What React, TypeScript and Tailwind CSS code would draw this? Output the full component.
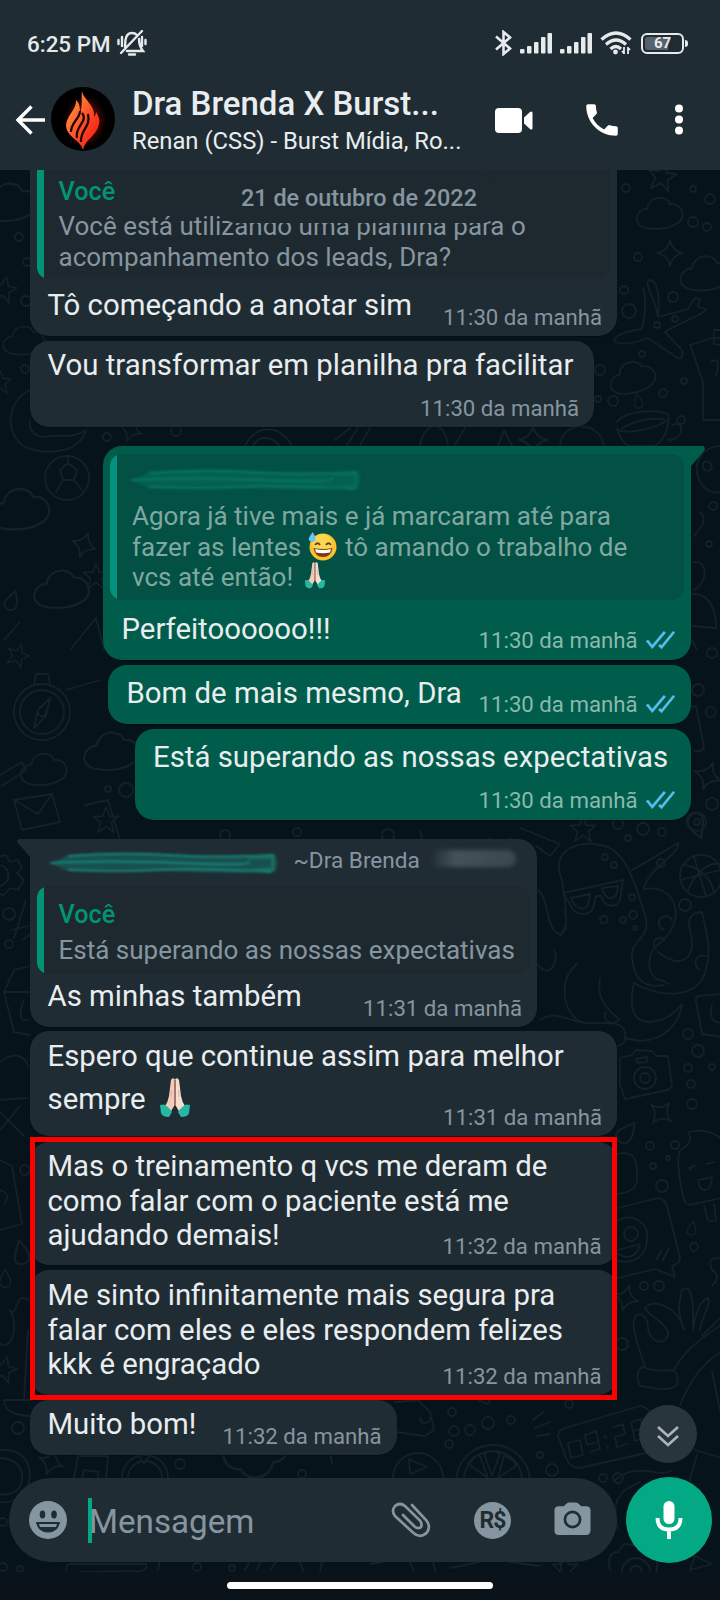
import type { ReactNode } from 'react'

const STAR = 'M0-14L4-4L14-4L6 3L9 14L0 7L-9 14L-6 3L-14-4L-4-4Z'
const SPARKLE = 'M0-13Q2-2 13 0Q2 2 0 13Q-2 2-13 0Q-2-2 0-13Z'
const CLOUD = 'M-14 14C-30 10-22-6-13-5C-10-20 8-18 10-10C22-12 28 4 16 10C8 15-4 16-14 14Z'
const DROP = 'M0-10C5-2 7 2 6 6C4 12-5 11-6 6C-7 2-3-3 0-10Z'

// [path, x, y, scale, rotation]
const shapes: [string, number, number, number, number][] = [
  [STAR, 662, 176, 1, 10],
  [CLOUD, 660, 214, 1, 0],
  [SPARKLE, 670, 253, 1, 0],
  [CLOUD, 706, 274, 1.1, 0],
  [CLOUD, 633, 378, 1, -8],
  [DROP, 638, 401, 0.7, -10],
  [SPARKLE, 533, 440, 1.1, 0],
  [CLOUD, 10, 203, 1.2, 0],
  [STAR, 4, 289, 0.9, 12],
  [CLOUD, 24, 341, 0.9, 0],
  [STAR, 0, 382, 0.8, 0],
  [SPARKLE, 131, 430, 0.9, 20],
  [SPARKLE, 84, 545, 1, 20],
  [CLOUD, 20, 510, 1.3, 0],
  [STAR, 96, 576, 0.9, 0],
  [CLOUD, 62, 590, 1.2, 0],
  [DROP, 12, 600, 1, 20],
  [STAR, 18, 655, 0.8, 20],
  [CLOUD, 112, 752, 1.2, 0],
  [STAR, 106, 820, 0.9, 0],
  [CLOUD, 44, 770, 1, 0],
  [SPARKLE, 708, 776, 1.1, 20],
  [STAR, 583, 829, 0.9, 0],
  [DROP, 697, 826, 1.3, 160],
  [SPARKLE, 661, 1113, 1, 40],
  [DROP, 21, 1252, 1.2, -10],
  [DROP, 5, 1278, 0.9, 0],
  [STAR, 4, 1369, 0.9, 15],
  [SPARKLE, 626, 1298, 1, 15],
  [DROP, 692, 1228, 0.7, 10],
  [DROP, 627, 1132, 1.2, 40],
  [SPARKLE, 51, 1462, 1, 20],
  [CLOUD, 255, 1455, 1.4, 180],
  [STAR, 565, 1568, 0.9, 0],
]

// [cx, cy, r]
const circles: [number, number, number][] = [
  [626, 188, 4], [693, 189, 3], [710, 199, 5], [693, 222, 5], [707, 227, 4], [638, 257, 4],
  [624, 290, 4], [673, 297, 5], [629, 311, 7], [657, 325, 3], [675, 319, 3], [642, 354, 3],
  [600, 370, 5], [684, 381, 3], [663, 393, 4], [613, 401, 5], [681, 420, 4], [598, 399, 3],
  [19, 237, 4], [27, 262, 4], [26, 301, 5], [25, 369, 4], [107, 437, 4], [176, 431, 5],
  [713, 506, 4], [709, 544, 3], [712, 653, 5], [698, 690, 6], [711, 712, 5], [712, 804, 6],
  [697, 822, 9], [697, 822, 3], [126, 790, 7], [108, 789, 3], [9, 914, 6], [9, 944, 4],
  [618, 824, 5], [643, 829, 6], [662, 832, 4], [628, 838, 3], [605, 857, 3], [614, 865, 3],
  [632, 897, 3], [633, 915, 4], [623, 920, 3], [635, 928, 2], [661, 863, 4], [685, 905, 6],
  [688, 1034, 5], [698, 1051, 6], [688, 1068, 4], [712, 1067, 3], [691, 1084, 4], [692, 1104, 5],
  [650, 1146, 4], [675, 1145, 4], [653, 1166, 3], [668, 1158, 2], [662, 1186, 6], [694, 1247, 4],
  [644, 1286, 4], [659, 1286, 5], [622, 1344, 6], [569, 1404, 4], [452, 1412, 4], [454, 1431, 5],
  [470, 1430, 5], [488, 1423, 6], [511, 1420, 4], [449, 1444, 4], [540, 1455, 3], [552, 1470, 6],
  [603, 1478, 4], [618, 1478, 5], [18, 1428, 6], [25, 1170, 5], [180, 1464, 5], [302, 1474, 4],
  [3, 1522, 4], [3, 1567, 4], [20, 1569, 3], [197, 1567, 4], [232, 1568, 3], [388, 835, 6],
  [225, 835, 5], [297, 832, 4],
]

const drawings = [
  // plane
  'M658 317C656 300 642 281 650 280C658 280 660 300 658 317L688 309L695 298L700 299L698 307L706 309C704 315 680 322 665 332L682 350C684 358 680 360 676 357L648 338C630 345 616 345 614 340C616 334 632 330 642 329Q648 300 643 288',
  // console
  'M690 345L712 338L728 338M690 345L703 382L703 420L728 420M714 330L728 330L728 346L714 344ZM710 362Q722 355 716 375',
  // cup
  'M617 422C625 410 665 408 669 416C672 425 620 438 617 428C620 440 626 446 632 446L655 446C664 440 668 430 669 418M672 425C686 420 684 440 668 440M622 428C640 418 655 418 664 419',
  // moon and its face
  'M30 390C8 400 4 430 22 445C40 456 80 455 86 430C70 440 60 434 50 436C36 440 28 430 30 420',
  // crayons and rings above the reply
  'M335 440L350 428M347 445L358 428M360 445L370 428M253 446C258 436 270 434 280 446M245 446C256 424 280 424 292 446M420 445C425 420 445 420 448 445M455 445L465 428M560 446C562 420 600 420 604 446M498 446L504 430L512 446',
  // football
  'M45 478A22 22 0 1 0 89 478A22 22 0 1 0 45 478ZM60 470L68 463L77 470L74 480L63 480ZM63 480L56 492M74 480L82 490M68 463L68 456',
  // emoji on the right edge
  'M722 446C700 446 694 464 698 476C702 490 712 494 722 492M703 463Q710 458 712 468Q708 474 703 468ZM700 512Q706 516 702 526L694 536M694 562C706 560 710 580 694 590M692 594C710 594 716 608 716 628L692 626M692 640L697 650',
  // compass
  'M14 712A28 28 0 1 0 70 712A28 28 0 1 0 14 712ZM20 712A22 22 0 1 0 64 712A22 22 0 1 0 20 712ZM50 698L46 716L34 728L38 710ZM34 684L36 674L48 674L50 684M38 712A4 4 0 1 0 46 712',
  // pencil, envelope and phone
  'M0 775L22 762L26 770L2 786M14 800L52 794L60 822L22 830ZM14 800L38 814L52 794M70 650L96 618L104 650M4 640L20 622M66 690L100 680M85 805L108 800L120 840',
  'M684 708L696 706L704 748Q702 752 694 751M420 830L430 870M490 838Q500 850 510 838',
  // gear
  'M-6 858L6 855L10 862L18 860L22 868L17 873L24 880L18 890L10 888L4 895L-6 893M-2 865A10 10 0 1 1-2 886M12 930L28 926M14 938L26 900M22 940L30 935',
  // carton
  'M14 970L30 966M14 970L4 992L14 1032L30 1035M4 992L30 992M24 1000C18 1014 20 1022 28 1020',
  'M0 1062C12 1052 24 1054 28 1066M0 1100L26 1098M0 1112L24 1136M0 1130L20 1106M0 1160L12 1166L22 1224L0 1230M0 1190Q12 1194 4 1204',
  'M28 1300C14 1290 18 1320 10 1310C20 1330 10 1350 0 1344M28 1330L24 1398M4 1400L30 1400M4 1402Q6 1415 30 1416',
  // octopus
  'M560 936C570 925 566 912 562 880C550 852 575 840 600 845C625 848 634 880 645 915C652 940 630 938 632 958C635 985 650 988 664 985M577 964C558 980 562 1010 580 1022C600 1026 618 1018 624 1030C628 1040 624 1044 618 1046M658 952C680 970 698 960 690 930C686 915 696 912 702 912C706 930 712 950 706 970C698 1000 660 998 634 983M634 983C628 1010 634 1022 650 1022C670 1020 676 1010 682 1004C680 1020 668 1040 640 1041L624 1038',
  'M632 870C650 860 666 850 678 843C680 855 650 866 644 888M644 889C672 884 682 910 672 928C665 945 645 945 650 970C655 984 664 978 668 984M600 978C596 1000 608 1010 620 1020M655 948A6 6 0 1 1 665 940M664 930A7 7 0 1 1 672 920M700 970A6 6 0 1 1 706 956M538 965C550 980 560 960 554 950M538 890C550 900 545 930 560 934C570 930 565 920 565 910M540 1020C555 1010 565 1020 582 1022M606 1012A6 6 0 1 0 618 1020',
  // sunglasses
  'M563 893L623 880L620 900C618 908 604 908 601 896L596 896L593 908C588 918 574 914 571 906ZM571 898L590 894L588 905C584 912 574 908 571 898ZM602 888L618 886C618 900 606 904 602 888Z',
  'M520 828L560 844L550 856L536 846M600 918Q608 912 607 922Q600 926 600 918Z',
  // basketball
  'M680 876A21 21 0 1 0 722 876A21 21 0 1 0 680 876M684 865C700 866 712 880 714 893M688 890C696 872 708 862 720 864M694 857L706 896M680 880L720 870',
  // card
  'M722 994L698 996Q695 998 696 1002L702 1034L722 1037M712 1005C708 1015 714 1025 722 1022',
  // camera
  'M620 1058L632 1055L636 1050L652 1051L656 1056L668 1056L672 1086L668 1090L625 1099L620 1085ZM634 1078A11 11 0 1 0 656 1078A11 11 0 1 0 634 1078ZM640 1078A5 5 0 1 0 650 1078A5 5 0 1 0 640 1078ZM636 1059L647 1057L647 1062L637 1063Z',
  // ice lolly
  'M688 1133C692 1130 712 1128 722 1140M688 1133C694 1142 685 1148 680 1150C676 1160 680 1184 684 1200Q686 1206 694 1204L722 1198M704 1206L708 1220Q712 1222 716 1220L714 1204M688 1168L696 1166M690 1170L694 1165M706 1164L714 1162M698 1180L712 1177Q711 1192 703 1190Q699 1188 698 1180',
  // speech bubble with a grin
  'M618 1208L658 1198Q664 1198 667 1206L680 1258Q680 1262 676 1264L672 1266L675 1277L655 1269L618 1278M618 1220C635 1212 650 1225 647 1240C646 1258 632 1264 618 1261M624 1234A7 7 0 1 0 638 1234A7 7 0 1 0 624 1234M618 1250L640 1244C638 1256 628 1260 618 1254M656 1260L662 1250M663 1260L669 1248M617 1154C635 1150 638 1160 637 1180Q636 1192 617 1194M722 1258Q706 1256 712 1270Q722 1276 712 1286',
  // ok hand
  'M645 1367C638 1345 632 1330 634 1320C638 1308 648 1316 648 1328C650 1345 668 1346 668 1332C664 1320 650 1318 645 1308C655 1296 680 1310 684 1330M684 1330C676 1310 680 1300 682 1290C690 1284 694 1295 693 1326M693 1330C696 1310 702 1300 708 1298C712 1302 702 1316 700 1330M702 1336L722 1316M674 1370C684 1350 700 1340 722 1324M642 1367Q654 1372 672 1370Q679 1372 677 1384Q674 1390 660 1389L640 1386Q634 1374 642 1367Z',
  'M680 1405C690 1380 705 1360 722 1352M712 1372L722 1420M695 1450L722 1458M697 1455L688 1486',
  // alarm clock
  'M565 1428L640 1406Q655 1408 660 1440L650 1452L580 1468Q570 1468 566 1458L558 1436Q558 1430 565 1428ZM568 1443L580 1440L583 1455L571 1458ZM598 1442L587 1445L585 1435L596 1431L600 1449L590 1452M605 1436L606 1438M607 1446L608 1448M613 1427L623 1424L625 1434L615 1437L617 1447L627 1444M631 1422L641 1419L643 1428L633 1431ZM633 1431L643 1428L645 1438L635 1441Z',
  'M533 1420L543 1412M535 1428L550 1422M537 1436L550 1434M395 1402L420 1400M396 1432L425 1436L434 1430L430 1412L420 1402M420 1418A5 5 0 1 0 430 1418M478 1400L488 1404L490 1400',
  // citrus slice
  'M456 1482A37 37 0 1 1 530 1482M464 1480A29 29 0 1 1 522 1480M492 1476L484 1454Q492 1448 500 1454ZM488 1478L468 1464Q474 1454 480 1456ZM498 1478L504 1456Q514 1458 516 1466ZM486 1480L466 1480M500 1480L520 1480',
  // play button and stopwatch
  'M393 1478A25 25 0 1 1 443 1478M409 1459L410 1474L427 1467ZM122 1478A23 23 0 1 1 168 1478M128 1478A17 17 0 1 1 162 1478M140 1458L144 1464L152 1452M0 1450C20 1448 30 1460 30 1476C28 1495 15 1504 0 1502M0 1458C15 1458 24 1468 22 1480C20 1492 10 1496 0 1494M78 1456L108 1456L106 1478M78 1456L74 1478M82 1478L84 1470L98 1472L98 1478M330 1452L332 1464',
  'M615 1480C640 1460 660 1480 672 1470M618 1530C610 1500 620 1490 640 1482M66 1570Q66 1562 76 1564L146 1564Q148 1570 140 1571L80 1572M160 1560L158 1570M245 1570L250 1560M256 1570L262 1560M270 1570L276 1562M300 1562L304 1572M322 1562L320 1572',
  'M610 1570Q606 1552 618 1552L624 1544L640 1546L644 1552L652 1552Q660 1560 656 1572M622 1572A14 14 0 0 1 650 1572M630 1572A6 6 0 0 1 642 1572M450 1568L480 1562M510 1562L540 1566M560 1562L562 1572M695 1556L712 1564L690 1570ZM410 1562L414 1572M432 1560L436 1572M370 1564L382 1562',
]

function Wallpaper() {
  return (
    <svg
      className="absolute inset-0 h-full w-full"
      viewBox="0 170 720 1402"
      fill="none"
      stroke="#142128"
      strokeWidth="1.8"
      strokeLinejoin="round"
      strokeLinecap="round"
    >
      {shapes.map(([d, x, y, s, r], i) => (
        <path key={i} d={d} transform={`translate(${x} ${y}) rotate(${r}) scale(${s})`} />
      ))}
      {circles.map(([cx, cy, r], i) => (
        <circle key={i} cx={cx} cy={cy} r={r} />
      ))}
      {drawings.map((d, i) => (
        <path key={i} d={d} />
      ))}
    </svg>
  )
}

function Ticks() {
  return (
    <svg className="mb-[3px] h-[20px] w-[31px]" viewBox="0 0 32 20" fill="none" stroke="#53bdeb" strokeWidth="2.8">
      <path d="M2 10.5L7.5 17L20.5 1.5" />
      <path d="M14.5 15L17 17.5L30 1.5" />
    </svg>
  )
}

function Time({ children, sent = false }: { children: ReactNode; sent?: boolean }) {
  return (
    <div
      className={`col-start-1 row-start-1 flex items-end gap-[7px] self-end justify-self-end text-[22.2px] leading-[26px] whitespace-nowrap ${
        sent ? 'mr-[15px] mb-[7px] text-[#8db8ae]' : 'mr-[15px] mb-[6.5px] text-[#8696a0]'
      }`}
    >
      <span>{children}</span>
      {sent && <Ticks />}
    </div>
  )
}

function Bubble({
  className,
  time,
  sent = false,
  children,
}: {
  className: string
  time: string
  sent?: boolean
  children: ReactNode
}) {
  return (
    <div
      className={`relative grid shrink-0 rounded-[19px] shadow-[0_1px_1px_rgba(0,0,0,0.3)] ${
        sent ? 'self-end bg-[#005d4b]' : 'self-start bg-[#202c33]'
      } ${className}`}
    >
      <div className="col-start-1 row-start-1 min-w-0">{children}</div>
      <Time sent={sent}>{time}</Time>
    </div>
  )
}

function Message({ className = '', children }: { className?: string; children: ReactNode }) {
  return (
    <p className={`text-[29.35px] leading-[34.5px] whitespace-nowrap text-[#e9edef] ${className}`}>{children}</p>
  )
}

function PrayingHands({ className }: { className: string }) {
  return (
    <svg className={`inline-block ${className}`} viewBox="0 0 30 40" role="img">
      <path d="M11 2Q12.500-1 14.700 1V27L10 35L4.500 29Q8 24 9 18Z" fill="#f3cbb8" />
      <path d="M19 2Q17.500-1 15.300 1V27L20 35L25.500 29Q22 24 21 18Z" fill="#f8dccd" />
      <path d="M15 2V28" stroke="#8f5f52" strokeWidth="1.2" fill="none" />
      <path d="M11.500 12L11 19M18.500 12L19 19" stroke="#d9a592" strokeWidth="0.8" fill="none" />
      <path d="M0 27L4 26.500Q10 30 12 34L9 39Q2 39 1 35Z" fill="#25b9a4" />
      <path d="M30 27L26 26.500Q20 30 18 34L21 39Q28 39 29 35Z" fill="#25b9a4" />
    </svg>
  )
}

function SweatSmile() {
  return (
    <svg className="-mt-1 mr-[2px] inline-block h-[29px] w-[29px] align-middle" viewBox="0 0 29 29" role="img">
      <circle cx="15" cy="15" r="13.500" fill="#fbc02f" />
      <circle cx="14" cy="12" r="10" fill="#fdd650" />
      <path d="M5.500 16Q15 18 24.500 16Q23 25 15 25Q7 25 5.500 16Z" fill="#7a3a18" />
      <path d="M7 17Q15 19 23 17L22 20.500Q15 22 8 20.500Z" fill="#fff" />
      <path d="M7 13Q9.500 9.500 12 13M18 13Q20.500 9.500 23 13" stroke="#6b3f14" strokeWidth="1.8" fill="none" />
      <path d="M4.500 0C8 5 8 7 7 9C5 11 2 10 1 8C0 6 3 3 4.500 0Z" fill="#6cc5f0" />
    </svg>
  )
}

function Quote({ className = '', sent = false, children }: { className?: string; sent?: boolean; children: ReactNode }) {
  return (
    <div
      className={`mx-[7px] flex overflow-hidden rounded-[12px] text-[26px] leading-[30.6px] whitespace-nowrap ${
        sent ? 'bg-[#025144] text-[#80a8a1]' : 'bg-[#1e292f] text-[#8696a0]'
      } ${className}`}
    >
      <div className={`w-[7px] shrink-0 ${sent ? 'bg-[#06917f]' : 'bg-[#029375]'}`} />
      <div className="flex flex-col pl-[15px]">{children}</div>
    </div>
  )
}

function Smear({ className, dark = false }: { className: string; dark?: boolean }) {
  return (
    <svg
      className={`blur-[0.8px] ${className}`}
      viewBox="0 0 230 22"
      preserveAspectRatio="none"
      fill="none"
      strokeLinecap="round"
    >
      <path
        d="M18 3Q60 0 120 3T226 2Q231 10 226 20Q170 22 120 19T18 19L10 15L1 11L12 7Z"
        fill={dark ? '#04604f' : '#18504f'}
      />
      <path
        d="M20 4Q70 0 120 3T224 3M2 11Q60 8 130 11T200 10M20 18Q70 20 110 18T222 20"
        stroke={dark ? '#077766' : '#16857a'}
        strokeWidth="2"
      />
      <path d="M200 5H224V17L196 19" stroke={dark ? '#076b5b' : '#187268'} strokeWidth="3" />
    </svg>
  )
}

function SignalBars() {
  return (
    <svg className="h-[22px] w-[32px]" viewBox="0 0 32 22" fill="#e6eaec">
      <rect x="0" y="17" width="4.500" height="4.500" rx="1" />
      <rect x="7" y="14" width="4.500" height="7.500" rx="1" />
      <rect x="14" y="10" width="4.500" height="11.500" rx="1" />
      <rect x="21" y="5" width="4.500" height="16.500" rx="1" />
      <rect x="27.500" y="1" width="4.500" height="20.500" rx="1" />
    </svg>
  )
}

function StatusBar() {
  return (
    <div className="flex h-[86px] items-center pr-[32px] pl-[27px] text-[#e6eaec]">
      <span className="mt-[2px] text-[22.4px] leading-[26px] font-medium">6:25 PM</span>
      <svg
        className="ml-[6px] h-[28px] w-[30px]"
        viewBox="0 0 30 28"
        fill="none"
        stroke="currentColor"
        strokeWidth="2.400"
        strokeLinecap="round"
      >
        <path d="M8 18L8.500 11Q9.500 4 15 4Q18 4 20 6M22 10Q22 17 26 22L10 22M25 2L4 24M1.500 11V15M5 8V17M25 8V17M28.500 11V15M12 25.500H18" />
      </svg>
      <div className="ml-auto flex items-center">
        <svg className="h-[26px] w-[17px]" viewBox="0 0 17 26" fill="none" stroke="currentColor" strokeWidth="2.600">
          <path d="M1 6.500L15 18.500L8.500 24V2L15 7.500L1 19.500" />
        </svg>
        <div className="ml-[8px] flex gap-[8px]">
          <SignalBars />
          <SignalBars />
        </div>
        <svg
          className="ml-[8px] h-[24px] w-[32px]"
          viewBox="0 0 32 24"
          fill="none"
          stroke="currentColor"
          strokeWidth="3.200"
        >
          <path d="M1.500 8.500Q16-4.500 30.500 8.500M6 13.500Q16 4.500 26 13.500M10.500 18Q16 13 21 18" />
          <circle cx="15.500" cy="21" r="2.400" fill="currentColor" stroke="none" />
          <path d="M24 16V23M28 16V23M22 20L24 22.500M30 19L28 16.500" strokeWidth="1.800" />
        </svg>
        <div className="ml-[9px] flex h-[21px] w-[43px] items-center rounded-[6px] border-[2.5px] border-current p-[2px]">
          <div className="flex h-full w-full items-center justify-center rounded-[3px] bg-[linear-gradient(90deg,#56616a_66%,transparent_66%)] text-[15px] leading-none font-bold">
            67
          </div>
        </div>
        <div className="ml-[1px] h-[7px] w-[3px] rounded-r bg-current" />
      </div>
    </div>
  )
}

function Avatar() {
  return (
    <svg className="ml-[6px] h-[64px] w-[64px]" viewBox="0 0 64 64">
      <defs>
        <linearGradient id="flame" x1="0" y1="0" x2="1" y2="1">
          <stop offset="0.200" stopColor="#ff8a3a" />
          <stop offset="0.600" stopColor="#fb4322" />
          <stop offset="1" stopColor="#f01010" />
        </linearGradient>
        <radialGradient id="glow">
          <stop offset="0.500" stopColor="#8c1208" />
          <stop offset="1" stopColor="#000" />
        </radialGradient>
      </defs>
      <circle cx="32" cy="32" r="32" fill="#000" />
      <ellipse cx="34" cy="34" rx="21" ry="26" fill="url(#glow)" opacity="0.600" />
      <path
        d="M31 4C32 12 45 19 43 30C44 29 45 27 45 25C48 30 49 33 48 37C46 49 34 52 32 63C30 53 15 50 15 38C16 28 26 22 25 13C29 17 29 21 29 26C32 18 30 11 31 4Z"
        fill="url(#flame)"
      />
      <path
        d="M29 24C29 32 20 35 20 45M31 26C38 34 23 40 26 51M37 27C40 41 29 42 30 55"
        stroke="#1d0302"
        strokeWidth="2.200"
        fill="none"
      />
    </svg>
  )
}

function Header() {
  return (
    <header className="relative z-10 h-[170px] shrink-0 bg-[#202c33]">
      <StatusBar />
      <div className="flex h-[66px] items-center pl-[15px]">
        <svg className="mt-[1px] h-[30px] w-[30px]" viewBox="0 0 30 30" fill="none" stroke="#fff" strokeWidth="3.400">
          <path d="M30 15H3M16.500 1.500L3 15L16.500 28.500" />
        </svg>
        <Avatar />
        <div className="mt-[4px] ml-[17px] w-[346px] whitespace-nowrap text-[#e9edef]">
          <h1 className="text-[33px] leading-[38px] font-medium">Dra Brenda X Burst...</h1>
          <p className="mt-[2px] text-[23.8px] leading-[32px]">Renan (CSS) - Burst Mídia, Ro...</p>
        </div>
        <svg className="mt-[2px] ml-[17px] h-[25px] w-[38px]" viewBox="0 0 38 25" fill="#fff">
          <rect width="27" height="25" rx="4" />
          <path d="M29 9.500L35 4Q37.500 2.500 37.500 5V20Q37.500 22.500 35 21L29 15.500Z" />
        </svg>
        <svg className="mt-[2px] ml-[48px] h-[42px] w-[42px]" viewBox="0 0 24 24" fill="#fff">
          <path d="M6.620 10.790c1.440 2.830 3.760 5.140 6.590 6.590l2.200-2.200c.27-.27.67-.36 1.020-.24 1.120.37 2.330.57 3.570.57.55 0 1 .45 1 1V20c0 .55-.45 1-1 1-9.390 0-17-7.610-17-17 0-.55.45-1 1-1h3.500c.55 0 1 .45 1 1 0 1.250.2 2.450.57 3.570.11.35.03.74-.25 1.020l-2.200 2.200z" />
        </svg>
        <svg className="mt-[2px] ml-[52px] h-[32px] w-[8px]" viewBox="0 0 8 32" fill="#fff">
          <circle cx="4" cy="4.500" r="4" />
          <circle cx="4" cy="15.500" r="4" />
          <circle cx="4" cy="26.500" r="4" />
        </svg>
      </div>
    </header>
  )
}

function Composer() {
  return (
    <div className="absolute inset-x-0 bottom-[9px] flex items-center pl-[9px]">
      <div className="flex h-[84px] w-[608px] items-center rounded-full bg-[#202c33]">
        <svg className="ml-[20px] h-[38px] w-[38px]" viewBox="0 0 38 38">
          <circle cx="19" cy="19" r="19" fill="#8696a0" />
          <ellipse cx="13.500" cy="13.500" rx="2.800" ry="4" fill="#202c33" />
          <ellipse cx="25" cy="13.500" rx="2.800" ry="4" fill="#202c33" />
          <path d="M7 21H31Q29 31.500 19 31.500Q9 31.500 7 21Z" fill="#202c33" />
          <path d="M10 23H28L27 26H11Z" fill="#8696a0" />
        </svg>
        <div className="ml-[21px] h-[45px] w-[4px] bg-[#04a784]" />
        <span className="mt-[3px] -ml-[3px] w-[300px] text-[33.2px] leading-[40px] text-[#8696a0]">Mensagem</span>
        <svg
          className="ml-[2px] h-[38px] w-[40px]"
          viewBox="0 0 40 38"
          fill="none"
          stroke="#8696a0"
          strokeWidth="2.700"
          strokeLinecap="round"
        >
          <path d="M21 4L35.500 19.500Q40 26 36 31.500Q29 38 22.500 32L4 15Q0 10 4 5Q9 1 14 5L29 19.500Q32 24 29.500 26.500Q26.500 28 23.500 25.500L12 14" />
        </svg>
        <div className="ml-[43px] flex h-[37px] w-[37px] items-center justify-center rounded-full bg-[#8696a0] text-[23px] leading-none font-bold tracking-[-1px] text-[#202c33]">
          R$
        </div>
        <svg className="-mt-[3px] ml-[43px] h-[35px] w-[37px]" viewBox="0 0 38 35">
          <path
            d="M5 5H10L13 2Q14 1 16 1H22Q24 1 25 2L28 5H33Q37.500 5 37.500 9V30Q37 34.500 33 34.500H5Q0.500 34.500 0.500 30V9Q0.500 5 5 5Z"
            fill="#8696a0"
          />
          <circle cx="19" cy="18.500" r="7.800" fill="#8696a0" stroke="#202c33" strokeWidth="2.800" />
        </svg>
      </div>
      <div className="ml-[9px] flex h-[86px] w-[86px] items-center justify-center rounded-full bg-[#03a884]">
        <svg className="h-[38px] w-[28px]" viewBox="0 0 28 38" fill="none">
          <rect x="8.500" y="0" width="11" height="23" rx="5.500" fill="#fff" />
          <path d="M2.500 17Q2.500 28.500 14 28.500Q25.500 28.500 25.500 17M14 28V38" stroke="#fff" strokeWidth="4" />
        </svg>
      </div>
    </div>
  )
}

export default function App() {
  return (
    <div className="flex h-[1600px] w-[720px] flex-col overflow-hidden bg-[#0a131a] font-['Roboto',sans-serif]">
      <Header />
      <main className="relative h-[1402px] shrink-0 overflow-hidden bg-[#07131a]">
        <Wallpaper />
        <div className="relative flex flex-col pr-[29.5px] pl-[29.5px]">
          <Bubble className="h-[166px] w-[587.5px] rounded-t-none" time="11:30 da manhã">
            <Quote className="h-[109px] rounded-t-none">
              <span className="mt-[7px] text-[25.2px] leading-[29px] font-medium text-[#029375]">Você</span>
              <span className="mt-[5px]">Você está utilizando uma planilha para o</span>
              <span>acompanhamento dos leads, Dra?</span>
            </Quote>
            <Message className="mt-[9px] pl-[18px]">Tô começando a anotar sim</Message>
          </Bubble>

          <Bubble className="mt-[5px] h-[86px] w-[564.5px]" time="11:30 da manhã">
            <Message className="mt-[7px] pl-[18px]">Vou transformar em planilha pra facilitar</Message>
          </Bubble>

          <Bubble sent className="mt-[19px] h-[214px] w-[587.5px] rounded-tr-none" time="11:30 da manhã">
            <svg className="absolute top-0 -right-[14px] h-[22px] w-[15px]" viewBox="0 0 15 22" fill="#005d4b">
              <path d="M0 0H13Q16 1 14 5L1 20H0Z" />
            </svg>
            <Quote sent className="mt-[8px] h-[146px]">
              <Smear dark className="mt-[15px] -ml-[2px] h-[22px] w-[232px]" />
              <span className="mt-[10px]">Agora já tive mais e já marcaram até para</span>
              <span>
                fazer as lentes <SweatSmile /> tô amando o trabalho de
              </span>
              <span>
                vcs até então! <PrayingHands className="-mt-2 ml-[4px] h-[27px] w-[22px] align-middle" />
              </span>
            </Quote>
            <Message className="mt-[12px] pl-[18.5px]">Perfeitoooooo!!!</Message>
          </Bubble>

          <Bubble sent className="mt-[5px] h-[59px] w-[582.5px]" time="11:30 da manhã">
            <Message className="mt-[11px] pl-[18.5px]">Bom de mais mesmo, Dra</Message>
          </Bubble>

          <Bubble sent className="mt-[5px] h-[91px] w-[555.5px]" time="11:30 da manhã">
            <Message className="mt-[11px] pl-[18px]">Está superando as nossas expectativas</Message>
          </Bubble>

          <Bubble className="mt-[19px] h-[188px] w-[507.5px] rounded-tl-none" time="11:31 da manhã">
            <svg className="absolute top-0 -left-[13px] h-[20px] w-[14px]" viewBox="0 0 14 20" fill="#202c33">
              <path d="M14 0H2Q-1 1 1 4L13 18H14Z" />
            </svg>
            <div className="flex h-[47px] items-start pl-[19px] text-[22.6px] leading-[27px] whitespace-nowrap text-[#8696a0]">
              <Smear className="mt-[13px] h-[22px] w-[230px]" />
              <span className="mt-[8px] ml-[15px]">~Dra Brenda</span>
              <div className="mt-[11px] ml-[10px] h-[17px] w-[86px] rounded-full bg-gradient-to-r from-transparent via-[#46525a] via-30% to-[#3b474f] blur-[2px]" />
            </div>
            <Quote className="h-[88px]">
              <span className="mt-[14px] text-[25.2px] leading-[29px] font-medium text-[#029375]">Você</span>
              <span className="mt-[6px]">Está superando as nossas expectativas</span>
            </Quote>
            <Message className="mt-[5px] pl-[18px]">As minhas também</Message>
          </Bubble>

          <Bubble className="mt-[4px] h-[105px] w-[587.5px]" time="11:31 da manhã">
            <Message className="mt-[8px] pl-[18px]">Espero que continue assim para melhor</Message>
            <Message className="mt-[2px] flex items-center pl-[18px]">
              <span className="mt-[5px]">sempre</span>
              <PrayingHands className="mt-[2px] ml-[14px] h-[40px] w-[30px]" />
            </Message>
          </Bubble>

          <div className="relative mt-[6px] flex flex-col">
            <Bubble className="h-[123px] w-[587px]" time="11:32 da manhã">
              <Message className="mt-[7px] pl-[18px]">
                Mas o treinamento q vcs me deram de
                <br />
                como falar com o paciente está me
                <br />
                ajudando demais!
              </Message>
            </Bubble>
            <Bubble className="mt-[5px] h-[125px] w-[587px]" time="11:32 da manhã">
              <Message className="mt-[8px] pl-[18px]">
                Me sinto infinitamente mais segura pra
                <br />
                falar com eles e eles respondem felizes
                <br />
                kkk é engraçado
              </Message>
            </Bubble>
            <div className="absolute -top-[5px] left-[0.5px] h-[263px] w-[587px] border-[5px] border-[#fe0000]" />
          </div>

          <Bubble className="mt-[5px] h-[55px] w-[367px]" time="11:32 da manhã">
            <Message className="mt-[7px] pl-[18px]">Muito bom!</Message>
          </Bubble>
        </div>

        <div className="absolute top-[5px] left-[359px] flex h-[48px] w-[272px] -translate-x-1/2 items-center justify-center rounded-[12px] bg-[#1e292f] text-[23.4px] font-medium text-[#8696a0]">
          21 de outubro de 2022
        </div>

        <div className="absolute right-[23px] bottom-[109px] flex h-[58px] w-[58px] items-center justify-center rounded-full bg-[#29353c]">
          <svg className="mt-[4px] h-[22px] w-[24px]" viewBox="0 0 24 22" fill="none" stroke="#aab5bb" strokeWidth="2.600">
            <path d="M2 2L12 11L22 2M2 11L12 20L22 11" />
          </svg>
        </div>

        <Composer />
      </main>
      <div className="flex h-[28px] justify-center pt-[10px]">
        <div className="h-[7px] w-[266px] rounded-full bg-white" />
      </div>
    </div>
  )
}
